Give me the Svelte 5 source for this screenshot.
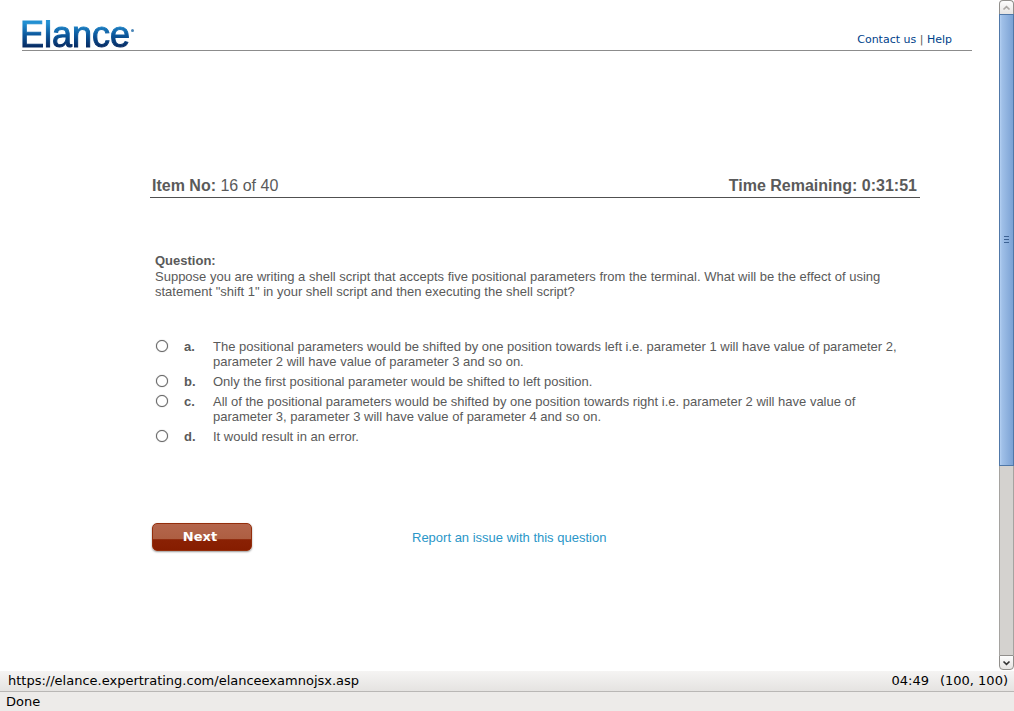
<script>
  const options = [
    { key: 'a', lines: ['The positional parameters would be shifted by one position towards left i.e. parameter 1 will have value of parameter 2,', 'parameter 2 will have value of parameter 3 and so on.'] },
    { key: 'b', lines: ['Only the first positional parameter would be shifted to left position.'] },
    { key: 'c', lines: ['All of the positional parameters would be shifted by one position towards right i.e. parameter 2 will have value of', 'parameter 3, parameter 3 will have value of parameter 4 and so on.'] },
    { key: 'd', lines: ['It would result in an error.'] }
  ];
  let selected = $state('');
</script>

<div class="window">
  <div class="viewport">
    <div class="page">
      <header>
        <a class="logo" href="#home">Elance<span class="dot"></span></a>
        <nav><a href="#contact">Contact us</a> | <a href="#help">Help</a></nav>
      </header>

      <main>
        <div class="status">
          <div><b>Item No:</b> 16 of 40</div>
          <b>Time Remaining: 0:31:51</b>
        </div>

        <section class="question">
          <b>Question:</b>
          <p>
            Suppose you are writing a shell script that accepts five positional parameters from the terminal. What will be the effect of using<br />
            statement "shift 1" in your shell script and then executing the shell script?
          </p>
        </section>

        <div class="options" role="radiogroup" aria-label="Question">
          {#each options as option}
            <label class="option">
              <input type="radio" name="answer" value={option.key} bind:group={selected} />
              <b>{option.key}.</b>
              <span>
                {#each option.lines as line, i}{#if i > 0}<br />{/if}{line}{/each}
              </span>
            </label>
          {/each}
        </div>

        <div class="actions">
          <button class="next" type="button">Next</button>
          <a href="#report">Report an issue with this question</a>
        </div>
      </main>
    </div>

    <div class="scrollbar">
      <button class="arrow up" type="button" aria-label="Scroll up">
        <svg width="9" height="6" viewBox="0 0 9 6"><path d="M1.5 4.5 4.5 1.7 7.5 4.5" fill="none" stroke="#aaa7a4" stroke-width="1.7" /></svg>
      </button>
      <div class="track">
        <div class="thumb"><i></i><i></i><i></i></div>
      </div>
      <button class="arrow down" type="button" aria-label="Scroll down">
        <svg width="9" height="6" viewBox="0 0 9 6"><path d="M1.5 1.5 4.5 4.3 7.5 1.5" fill="none" stroke="#333" stroke-width="1.7" /></svg>
      </button>
    </div>
  </div>

  <footer>
    <div class="location">
      <span>https://elance.expertrating.com/elanceexamnojsx.asp</span>
      <span class="clock"><span>04:49</span><span>(100, 100)</span></span>
    </div>
    <div class="done">Done</div>
  </footer>
</div>

<style>
  :global(body) {
    margin: 0;
    background: #fff;
  }
  .window {
    display: flex;
    flex-direction: column;
    min-height: 100vh;
    color: #5a5a5a;
    font: 13px/15px "Liberation Sans", Arial, sans-serif;
  }
  .viewport {
    display: flex;
    flex: 1;
  }
  .page {
    flex: 1;
    padding: 20px 27px 0 22px;
  }
  header {
    display: flex;
    justify-content: space-between;
    align-items: flex-end;
    height: 30px;
    border-bottom: 1px solid #8c8c8c;
  }
  .logo {
    display: flex;
    margin-left: -2px;
    font-size: 36px;
    line-height: 30px;
    color: transparent;
    text-decoration: none;
    background: linear-gradient(#2290d2 10%, #0b579c 50%, #062a62 90%);
    background-clip: text;
    -webkit-text-stroke: 1px transparent;
  }
  .dot {
    width: 3px;
    height: 3px;
    margin: 9px 0 0 1px;
    border-radius: 50%;
    background: #4a86b8;
  }
  nav {
    padding: 0 20px 3px 0;
    font: 11px/14px "DejaVu Sans", Verdana, sans-serif;
  }
  nav a {
    color: #00428a;
    text-decoration: none;
  }
  main {
    max-width: 770px;
    margin: 125px 52px 0 128px;
  }
  .status {
    display: flex;
    justify-content: space-between;
    padding: 0 3px 1px 2px;
    border-bottom: 1px solid #505050;
    font-size: 16px;
    line-height: 20px;
  }
  .question {
    margin: 55px 0 0 5px;
  }
  p {
    margin: 1px 0 0;
    white-space: nowrap;
  }
  .options {
    display: flex;
    flex-direction: column;
    gap: 5px;
    margin: 40px 0 0 5px;
  }
  .option {
    display: grid;
    grid-template-columns: 29px 29px 1fr;
    white-space: nowrap;
  }
  .option input {
    appearance: none;
    box-sizing: border-box;
    width: 12px;
    height: 12px;
    margin: 1px 0 0 1px;
    border: 1px solid #666;
    border-radius: 50%;
    background: #fff;
    box-shadow: 0 0 1px #777;
  }
  .option input:checked {
    background: radial-gradient(#444 35%, #fff 45%);
  }
  .actions {
    display: flex;
    align-items: center;
    gap: 160px;
    margin: 79px 0 0 2px;
  }
  .actions a {
    color: #2a96c8;
    text-decoration: none;
  }
  .next {
    width: 100px;
    height: 28px;
    padding: 0 4px 0 0;
    border: 1px solid #942e0c;
    border-radius: 5px;
    background: linear-gradient(#b4664c, #ad5e42 58%, #8a2104 60%, #861d00);
    box-shadow: 0 1px 2px #999;
    color: #fff;
    font: bold 13px/20px "DejaVu Sans", Verdana, sans-serif;
  }
  .scrollbar {
    display: flex;
    flex-direction: column;
    box-sizing: border-box;
    width: 15px;
    padding-bottom: 1px;
  }
  .arrow {
    display: flex;
    align-items: center;
    justify-content: center;
    box-sizing: border-box;
    width: 15px;
    height: 15px;
    padding: 0;
    border: 1px solid #918f8c;
    background: linear-gradient(#fcfcfc, #e6e4e2);
  }
  .up {
    height: 14px;
    border-bottom: 0;
    border-radius: 4px 4px 0 0;
  }
  .down {
    border-radius: 0 0 4px 4px;
  }
  .track {
    flex: 1;
    border: solid #a5a3a0;
    border-width: 0 1px;
    background: #d4d2cf;
  }
  .thumb {
    display: flex;
    flex-direction: column;
    align-items: center;
    justify-content: center;
    gap: 2px;
    box-sizing: border-box;
    height: 70.5%;
    margin: 0 -1px;
    border: 1px solid #5078a8;
    background: linear-gradient(90deg, #b4d0f2, #a0c0e8 15%, #7ba2d4);
  }
  .thumb i {
    width: 5px;
    height: 1px;
    background: #3d6293;
  }
  footer {
    color: #000;
    font: 13px/20px "DejaVu Sans", Verdana, sans-serif;
  }
  .location {
    display: flex;
    justify-content: space-between;
    padding: 0 6px 0 8px;
    background: linear-gradient(#f5f4f3, #e5e3e1);
    border-bottom: 1px solid #b9b7b5;
  }
  .clock {
    display: flex;
    gap: 11px;
  }
  .done {
    height: 19px;
    padding: 0 6px;
    background: #edebe9;
  }
</style>
